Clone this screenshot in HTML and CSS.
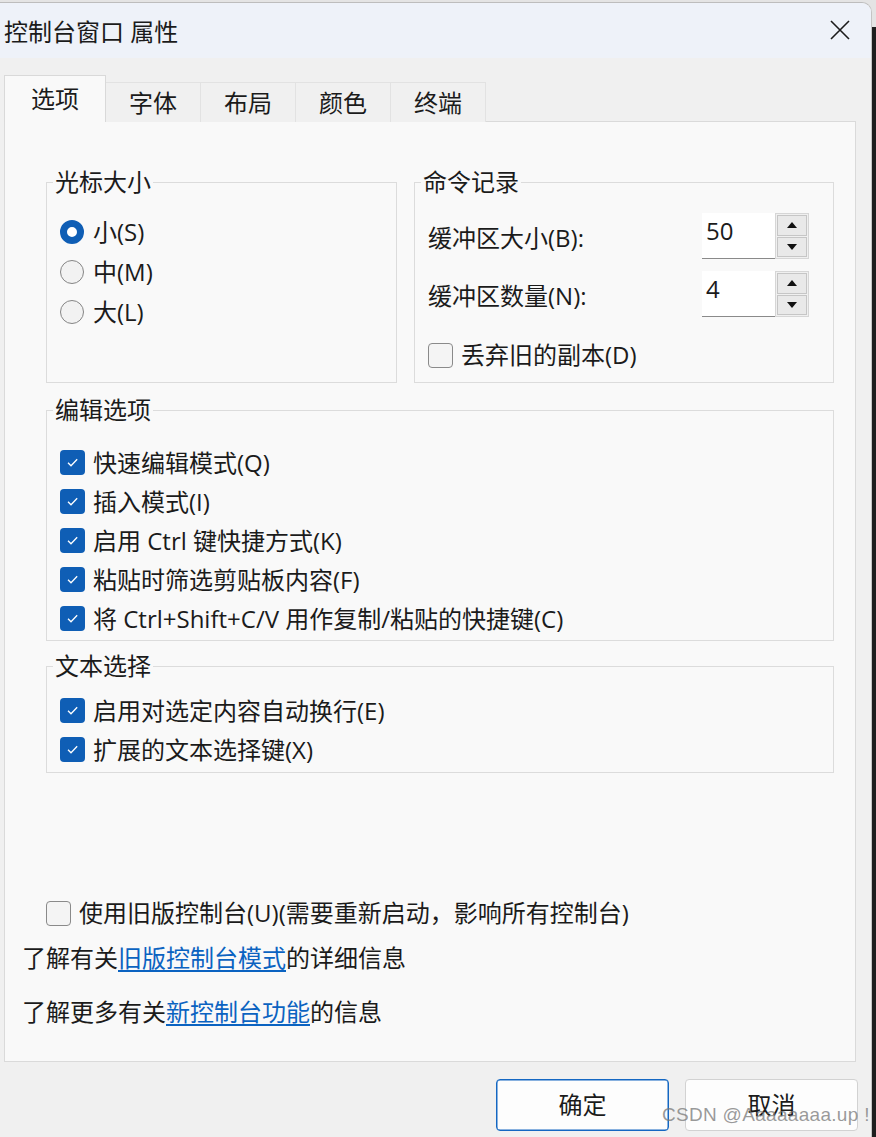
FILE: index.html
```html
<!DOCTYPE html>
<html lang="zh-CN">
<head>
<meta charset="utf-8">
<title>控制台窗口 属性</title>
<link rel="stylesheet" href="styles.css">
</head>
<body>
<div class="screen">
  <div class="window">
    <div class="titlebar">
      <span class="title">控制台窗口 属性</span>
      <svg class="close" width="20" height="20" viewBox="0 0 20 20"><path d="M1 1L19 19M19 1L1 19" stroke="#1b1b1b" stroke-width="1.6" fill="none"/></svg>
    </div>
    <div class="client">
      <div class="tabs">
        <div class="tab active">选项</div>
        <div class="tab">字体</div>
        <div class="tab">布局</div>
        <div class="tab">颜色</div>
        <div class="tab">终端</div>
      </div>
      <div class="panel">
        <div class="top-groups">
          <fieldset class="group cursor-group">
            <legend>光标大小</legend>
            <div class="cursor-body">
              <div class="opt"><span class="radio checked"></span>小(S)</div>
              <div class="opt"><span class="radio"></span>中(M)</div>
              <div class="opt"><span class="radio"></span>大(L)</div>
            </div>
          </fieldset>
          <fieldset class="group history-group">
            <legend>命令记录</legend>
            <div class="history-body">
              <div class="spin-row">
                <span>缓冲区大小(B):</span>
                <div class="spinner">
                  <div class="spin-value">50</div>
                  <div class="spin-btns">
                    <div class="spin-btn"><svg width="10" height="6" viewBox="0 0 10 6"><path d="M5 0L10 6H0Z" fill="#111"/></svg></div>
                    <div class="spin-btn"><svg width="10" height="6" viewBox="0 0 10 6"><path d="M0 0H10L5 6Z" fill="#111"/></svg></div>
                  </div>
                </div>
              </div>
              <div class="spin-row">
                <span>缓冲区数量(N):</span>
                <div class="spinner">
                  <div class="spin-value">4</div>
                  <div class="spin-btns">
                    <div class="spin-btn"><svg width="10" height="6" viewBox="0 0 10 6"><path d="M5 0L10 6H0Z" fill="#111"/></svg></div>
                    <div class="spin-btn"><svg width="10" height="6" viewBox="0 0 10 6"><path d="M0 0H10L5 6Z" fill="#111"/></svg></div>
                  </div>
                </div>
              </div>
              <div class="opt discard"><span class="check"></span>丢弃旧的副本(D)</div>
            </div>
          </fieldset>
        </div>

        <fieldset class="group edit-group">
          <legend>编辑选项</legend>
          <div class="list-body edit-body">
            <div class="opt row39"><svg class="checked-box" width="25" height="25" viewBox="0 0 25 25"><rect width="25" height="25" rx="4" fill="#0f5eb5"/><path d="M8 12.8L11 15.8L17.2 9.2" stroke="#fff" stroke-width="1.3" fill="none"/></svg>快速编辑模式(Q)</div>
            <div class="opt row39"><svg class="checked-box" width="25" height="25" viewBox="0 0 25 25"><rect width="25" height="25" rx="4" fill="#0f5eb5"/><path d="M8 12.8L11 15.8L17.2 9.2" stroke="#fff" stroke-width="1.3" fill="none"/></svg>插入模式(I)</div>
            <div class="opt row39"><svg class="checked-box" width="25" height="25" viewBox="0 0 25 25"><rect width="25" height="25" rx="4" fill="#0f5eb5"/><path d="M8 12.8L11 15.8L17.2 9.2" stroke="#fff" stroke-width="1.3" fill="none"/></svg>启用 Ctrl 键快捷方式(K)</div>
            <div class="opt row39"><svg class="checked-box" width="25" height="25" viewBox="0 0 25 25"><rect width="25" height="25" rx="4" fill="#0f5eb5"/><path d="M8 12.8L11 15.8L17.2 9.2" stroke="#fff" stroke-width="1.3" fill="none"/></svg>粘贴时筛选剪贴板内容(F)</div>
            <div class="opt row39"><svg class="checked-box" width="25" height="25" viewBox="0 0 25 25"><rect width="25" height="25" rx="4" fill="#0f5eb5"/><path d="M8 12.8L11 15.8L17.2 9.2" stroke="#fff" stroke-width="1.3" fill="none"/></svg>将 Ctrl+Shift+C/V 用作复制/粘贴的快捷键(C)</div>
          </div>
        </fieldset>

        <fieldset class="group select-group">
          <legend>文本选择</legend>
          <div class="list-body select-body">
            <div class="opt row39"><svg class="checked-box" width="25" height="25" viewBox="0 0 25 25"><rect width="25" height="25" rx="4" fill="#0f5eb5"/><path d="M8 12.8L11 15.8L17.2 9.2" stroke="#fff" stroke-width="1.3" fill="none"/></svg>启用对选定内容自动换行(E)</div>
            <div class="opt row39"><svg class="checked-box" width="25" height="25" viewBox="0 0 25 25"><rect width="25" height="25" rx="4" fill="#0f5eb5"/><path d="M8 12.8L11 15.8L17.2 9.2" stroke="#fff" stroke-width="1.3" fill="none"/></svg>扩展的文本选择键(X)</div>
          </div>
        </fieldset>

        <div class="opt legacy"><span class="check"></span>使用旧版控制台(U)(需要重新启动，影响所有控制台)</div>
        <div class="info first">了解有关<a href="#">旧版控制台模式</a>的详细信息</div>
        <div class="info second">了解更多有关<a href="#">新控制台功能</a>的信息</div>
      </div>
      <div class="buttons">
        <div class="btn primary">确定</div>
        <div class="btn">取消</div>
      </div>
    </div>
  </div>
  <div class="edge"></div>
</div>
<div class="watermark">CSDN @Aaaaaaaa.up !</div>
</body>
</html>
```

FILE: styles.css
```css
html, body {
  margin: 0;
  padding: 0;
}
body {
  width: 876px;
  height: 1137px;
  overflow: hidden;
  position: relative;
  background: #e4e4e4;
  font-family: "Open Sans", "Noto Sans CJK SC", sans-serif;
  font-size: 24px;
  color: #1b1b1b;
}
.screen {
  display: flex;
  padding-top: 2px;
  height: 1135px;
}
.window {
  width: 872px;
  height: 1135px;
  box-sizing: border-box;
  background: #f0f0f0;
  border-top: 1px solid #bdbdbd;
  border-right: 1px solid #c4c4c4;
  border-top-right-radius: 10px;
  overflow: hidden;
}
.edge {
  width: 4px;
  margin-top: 25px;
  background: #1e1e1e;
}
.titlebar {
  height: 55px;
  box-sizing: border-box;
  padding: 2px 0 0 4px;
  background: #eef2f9;
  display: flex;
  align-items: center;
  justify-content: space-between;
}
.title {
  line-height: 1;
}
.close {
  margin: 0 21px 3px 0;
}
.client {
  padding-top: 17px;
}
.tabs {
  display: flex;
  align-items: flex-end;
  padding-left: 4px;
  position: relative;
  z-index: 1;
  margin-bottom: -1px;
}
.tab {
  height: 40px;
  line-height: 40px;
  padding: 0 23px;
  border: 1px solid #e2e2e2;
  border-bottom: none;
  border-left: none;
  box-sizing: border-box;
  background: #f0f0f0;
}
.tab.active {
  height: 47px;
  line-height: 46px;
  padding: 0 0 0 26px;
  background: #f9f9f9;
  border: 1px solid #d9d9d9;
  border-bottom: none;
  width: 102px;
}
.panel {
  margin-left: 4px;
  width: 852px;
  height: 941px;
  box-sizing: border-box;
  background: #f9f9f9;
  border: 1px solid #dadada;
  padding: 47px 21px 0 17px;
}
.top-groups {
  display: flex;
  gap: 17px;
  margin-left: 24px;
}
.group {
  margin: 0;
  padding: 0;
  border: 1px solid #dcdcdc;
  min-width: 0;
}
.group legend {
  margin-left: 6px;
  padding: 0 2px;
  line-height: 26px;
}
.cursor-group {
  width: 351px;
  box-sizing: border-box;
  flex: none;
}
.history-group {
  flex: 1;
}
.opt {
  display: flex;
  align-items: center;
  line-height: 1;
  white-space: nowrap;
}
.cursor-body {
  padding: 17px 0 0 13px;
}
.cursor-body .opt {
  height: 40px;
  gap: 9px;
}
.radio {
  width: 24px;
  height: 24px;
  box-sizing: border-box;
  border-radius: 50%;
  border: 1px solid #858585;
  background: #f2f2f2;
  flex: none;
}
.radio.checked {
  border: 7px solid #0f5eb5;
  background: #ffffff;
}
.check {
  width: 25px;
  height: 25px;
  box-sizing: border-box;
  border: 1px solid #8a8a8a;
  border-radius: 4px;
  background: #f4f4f4;
  flex: none;
}
.history-body {
  padding: 18px 24px 7px 13px;
}
.spin-row {
  height: 46px;
  display: flex;
  align-items: center;
  justify-content: space-between;
  margin-bottom: 12px;
  line-height: 1;
}
.spin-row span {
  padding-top: 4px;
}
.spinner {
  display: flex;
  width: 107px;
  height: 46px;
}
.spin-value {
  flex: 1;
  background: #ffffff;
  border-bottom: 1px solid #8a8a8a;
  padding: 6px 0 0 4px;
  box-sizing: border-box;
  line-height: 1;
}
.spin-btns {
  width: 34px;
  display: flex;
  flex-direction: column;
  border: 1px solid #d6d6d6;
  box-sizing: border-box;
  background: #f0f0f0;
  padding: 1px;
  gap: 1px;
}
.spin-btn {
  flex: 1;
  background: #e9e9e9;
  border: 1px solid #c6c6c6;
  display: flex;
  align-items: center;
  justify-content: center;
}
.discard {
  height: 40px;
  gap: 8px;
  margin-top: 18px;
}
.edit-group {
  margin: 14px 0 0 24px;
}
.select-group {
  margin: 12px 0 0 24px;
}
.list-body {
  padding-left: 13px;
}
.edit-body {
  padding-top: 20px;
  padding-bottom: 2px;
}
.select-body {
  padding-top: 12px;
  padding-bottom: 3px;
}
.row39 {
  height: 39px;
  gap: 8px;
}
.checked-box {
  flex: none;
}
.legacy {
  height: 40px;
  margin: 120px 0 0 24px;
  gap: 8px;
}
.info {
  height: 40px;
  line-height: 40px;
  white-space: nowrap;
}
.info.first {
  margin-top: 5px;
}
.info.second {
  margin-top: 14px;
}
.info a {
  color: #0b63c1;
  text-decoration: underline;
  text-underline-offset: 3px;
}
.buttons {
  display: flex;
  justify-content: flex-end;
  gap: 16px;
  padding: 17px 13px 0 0;
}
.btn {
  width: 173px;
  height: 52px;
  box-sizing: border-box;
  border: 1px solid #d2d2d2;
  border-radius: 4px;
  background: #fdfdfd;
  display: flex;
  align-items: center;
  justify-content: center;
  line-height: 1;
}
.btn.primary {
  border: 1px solid #1467c2;
  box-shadow: inset 0 0 0 0.5px #1467c2;
}
.watermark {
  position: absolute;
  left: 662px;
  top: 1103px;
  font-family: "Liberation Sans", sans-serif;
  font-size: 19px;
  line-height: 24px;
  letter-spacing: 0.3px;
  color: rgba(120, 120, 120, 0.75);
  white-space: nowrap;
}
```
